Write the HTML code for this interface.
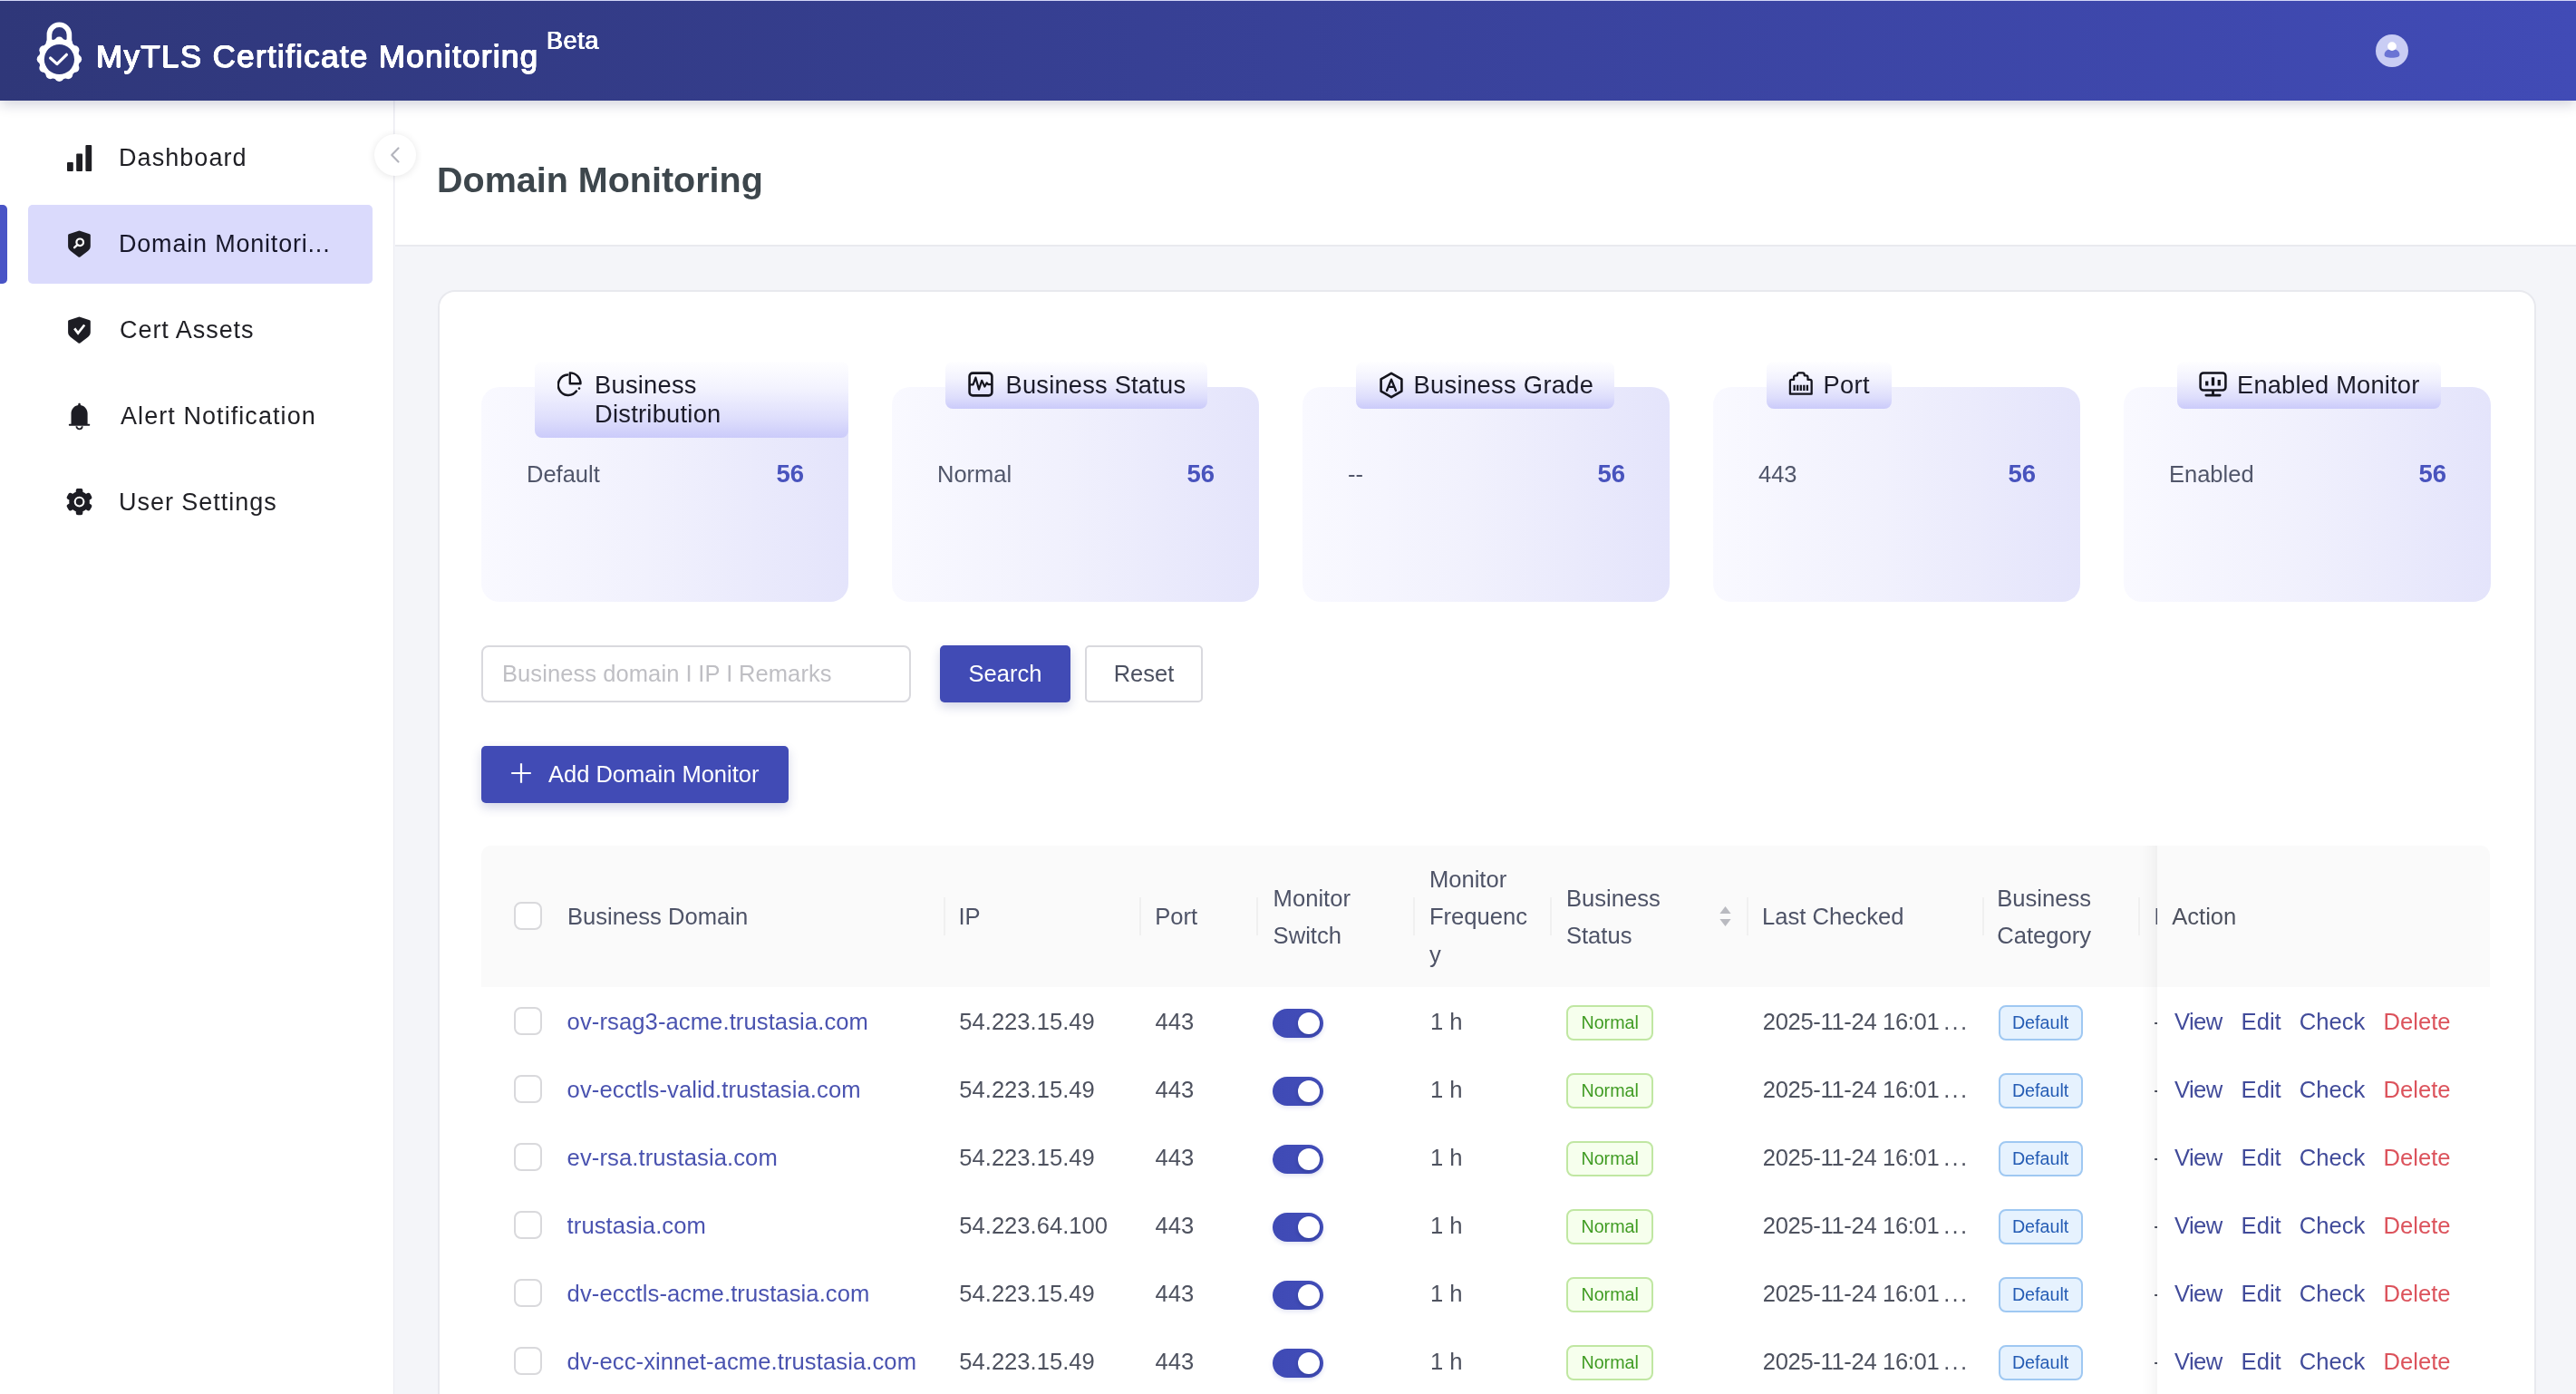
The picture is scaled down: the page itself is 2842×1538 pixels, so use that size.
<!DOCTYPE html>
<html lang="en">
<head>
<meta charset="utf-8">
<title>MyTLS Certificate Monitoring</title>
<style>
*{box-sizing:border-box;margin:0;padding:0}
html{-webkit-font-smoothing:antialiased}
html,body{width:2842px;height:1538px;overflow:hidden;background:#f4f5f9;font-family:"Liberation Sans",sans-serif;color:#4b5060}
.abs{position:absolute}
/* ---------- header ---------- */
#hdr{position:absolute;left:0;top:0;width:2842px;height:111px;border-top:1px solid #d3d6f7;background:linear-gradient(90deg,#2f3779 0%,#414bb6 100%);box-shadow:0 4px 14px rgba(20,25,70,.20);z-index:20}
#hdr .ttl{position:absolute;left:106px;top:39px;font-size:35px;line-height:44px;color:#fff;white-space:nowrap;text-shadow:.55px 0 0 #fff,-.55px 0 0 #fff,0 .5px 0 #fff,0 -.5px 0 #fff,.4px .4px 0 #fff,-.4px -.4px 0 #fff,.4px -.4px 0 #fff,-.4px .4px 0 #fff;letter-spacing:1.33px}
#hdr .beta{position:absolute;left:603px;top:29px;font-size:27px;line-height:30px;color:#fff;text-shadow:.45px 0 0 #fff,-.45px 0 0 #fff,0 .35px 0 #fff,0 -.35px 0 #fff;letter-spacing:.6px}
#hdr .logo{position:absolute;left:38px;top:21px}
#hdr .ava{position:absolute;left:2621px;top:37px;width:36px;height:36px;border-radius:50%;background:#c9cdf4;overflow:hidden}
/* ---------- sidebar ---------- */
#side{position:absolute;left:0;top:110px;width:435px;height:1428px;background:#fff;border-right:1px solid #ececf2;z-index:5}
.mi{position:absolute;left:31px;width:380px;height:87px;border-radius:5px;font-size:27px;color:#1f1f24;letter-spacing:.6px}
.mi .tx{position:absolute;left:102px;top:0;line-height:87px;white-space:nowrap}
.mi svg{position:absolute}
.mi.sel{background:#dadafc}
#selbar{position:absolute;left:0;top:116px;width:8px;height:87px;background:#4954c6;border-radius:0 5px 5px 0}
#colbtn{position:absolute;left:413px;top:148px;width:46px;height:46px;border-radius:50%;background:#fff;box-shadow:0 1px 8px rgba(0,0,0,.10);z-index:8}
/* ---------- page title ---------- */
#ptitle{position:absolute;left:436px;top:111px;width:2406px;height:160.5px;background:#fff;border-bottom:2px solid #e9eaef}
#ptitle h1{position:absolute;left:46px;top:63px;font-size:39.5px;line-height:48px;font-weight:bold;color:#3d464c;white-space:nowrap}
/* ---------- card ---------- */
#card{position:absolute;left:482.5px;top:319.5px;width:2315px;height:1300px;background:#fff;border:2px solid #e8e9ee;border-radius:19px}

/* ---------- stat cards ---------- */
.sc{position:absolute;top:427px;width:405px;height:237px;border-radius:20px;background:linear-gradient(90deg,#f9f9ff 0%,#f1f1fd 45%,#e4e4fb 100%)}
.tg{position:absolute;top:-28px;left:59px;max-width:346px;padding:10px 24px 10px 25px;display:flex;align-items:flex-start;border-radius:8px;background:linear-gradient(180deg,#fefeff 0%,#f3f3fe 35%,#dedefc 75%,#cbcbfa 100%);font-size:27.3px;line-height:32px;color:#1b1b29}
.tg svg{flex:none;margin:1px 15px 0 0}
.sr{position:absolute;left:50px;right:49px;top:76px;height:40px;line-height:40px;font-size:25.5px;color:#51566a}
.sr b{position:absolute;right:0;top:0;font-size:27.5px;color:#4853bd}
/* ---------- search ---------- */
#q{position:absolute;left:531px;top:712px;width:474px;height:63px;border:2px solid #d9d9de;border-radius:8px;background:#fff;font-size:25.5px;line-height:59px;padding-left:21px;color:#bfbfc4;white-space:nowrap;letter-spacing:.08px}
.btn{position:absolute;height:63px;line-height:62px;text-align:center;font-size:25.5px;border-radius:5px}
.btn.pri{background:#414bb5;color:#fff;box-shadow:0 5px 12px rgba(40,48,130,.20)}
.btn.def{background:#fff;border:2px solid #d9d9de;color:#4b5060;line-height:59px}

/* ---------- table ---------- */
#tbl{position:absolute;left:531px;top:933px;width:2216px;height:620px;overflow:hidden;border-radius:10px 10px 0 0;font-size:25.6px;color:#4e525f}
#tbl .hd{position:absolute;left:0;top:0;width:2216px;height:156px;background:#fafafa}
#tbl .th{position:absolute;line-height:41.6px;color:#4e5367;white-space:nowrap}
#tbl .sep{position:absolute;top:57px;width:2px;height:42px;background:#f0f0f0}
#tbl .row{position:absolute;left:0;width:2216px;height:75px;background:#fff}
#tbl .c{position:absolute;top:18px;line-height:41px;white-space:nowrap}
.cb{position:absolute;left:36px;width:31px;height:31px;border:2px solid #d9d9dc;border-radius:8px;background:#fff}
.lk{color:#4a53b0}
#fix .lk{color:#414b9a}
.sw{position:absolute;left:873px;top:24px;width:56px;height:32px;border-radius:16px;background:linear-gradient(90deg,#3f4ab5,#434eb9);box-shadow:0 2px 5px rgba(63,74,181,.16)}
.sw i{position:absolute;left:28px;top:4px;width:24px;height:24px;border-radius:50%;background:#fff;box-shadow:0 2px 4px rgba(0,20,80,.25)}
.tag{position:absolute;top:20px;height:39px;line-height:35px;border:2px solid;border-radius:8px;font-size:19.7px;text-align:center}
.tag.g{background:#f6ffed;border-color:#c0e7a2;color:#3f9b22}
.tag.b{background:#e6f2fe;border-color:#9fc8f2;color:#255cb4}
#fix{position:absolute;left:1849px;top:0;width:367px;height:620px;background:#fff}
#fix::before{content:'';position:absolute;left:-60px;top:0;bottom:0;width:60px;box-shadow:inset -20px 0 16px -16px rgba(5,5,5,.06)}
#fix .fh{position:absolute;left:0;top:0;width:367px;height:156px;background:#fafafa}
#fix .a{position:absolute;line-height:41px;white-space:nowrap}
.red{color:#dc535c}
.lc{letter-spacing:-.35px}.lc span{letter-spacing:2.3px;margin-left:4.8px}
#root{position:absolute;left:0;top:0;width:2842px;height:1538px;overflow:hidden;will-change:transform}
#q span{display:inline-block;width:6.6px;text-align:center}
</style>
</head>
<body>
<div id="root">
<div id="hdr">
  <svg class="logo" width="56" height="72" viewBox="0 0 56 72">
    <path d="M16.4 28 V16.2 a11 11 0 0 1 22 0 V28" fill="none" stroke="#fff" stroke-width="5.6"/>
    <g fill="#fff"><circle cx="27.4" cy="43.2" r="22.4"/><circle cx="27.40" cy="23.50" r="5"/><circle cx="37.25" cy="26.14" r="5"/><circle cx="44.46" cy="33.35" r="5"/><circle cx="47.10" cy="43.20" r="5"/><circle cx="44.46" cy="53.05" r="5"/><circle cx="37.25" cy="60.26" r="5"/><circle cx="27.40" cy="62.90" r="5"/><circle cx="17.55" cy="60.26" r="5"/><circle cx="10.34" cy="53.05" r="5"/><circle cx="7.70" cy="43.20" r="5"/><circle cx="10.34" cy="33.35" r="5"/><circle cx="17.55" cy="26.14" r="5"/></g>
    <circle cx="27.4" cy="43.5" r="16.6" fill="#2f377a"/>
    <path d="M17.6 42 L24.9 48.6 L35.4 38.3" fill="none" stroke="#fff" stroke-width="3.2" stroke-linecap="round" stroke-linejoin="round"/>
  </svg>
  <div class="ttl">MyTLS Certificate Monitoring</div>
  <div class="beta">Beta</div>
  <div class="ava"><svg width="36" height="36" viewBox="0 0 36 36"><path d="M9.6 22.4 C9.6 18.6 13 16 18 16 C23 16 26.4 18.6 26.4 22.4 C26.4 24.6 23 25.7 18 25.7 C13 25.7 9.6 24.6 9.6 22.4 Z" fill="#6a74d4"/><circle cx="18" cy="13.1" r="4.9" fill="#fff"/></svg></div>
</div>
<div id="side">
  <div id="selbar"></div>
  <div class="mi" style="top:21px">
    <svg style="left:43px;top:29px" width="28" height="30" viewBox="0 0 28 30"><rect x="0" y="19" width="6.8" height="10" rx="1" fill="#1f1f24"/><rect x="10.2" y="9.5" width="6.8" height="19.5" rx="1" fill="#1f1f24"/><rect x="20.4" y="0" width="6.8" height="29" rx="1" fill="#1f1f24"/></svg>
    <div class="tx" style="letter-spacing:1.06px;left:100px">Dashboard</div>
  </div>
  <div class="mi sel" style="top:116px">
    <svg style="left:43px;top:28px" width="27" height="31" viewBox="0 0 27 31"><path d="M13.45 0.4 L24.9 4.3 C25.5 4.5 25.8 5 25.8 5.6 V17.6 C25.8 19.7 24.8 21.5 23.2 22.7 L14.4 29.5 C13.8 29.9 13.1 29.9 12.5 29.5 L3.7 22.7 C2.1 21.5 1.1 19.7 1.1 17.6 V5.6 C1.1 5 1.4 4.5 2 4.3 Z" fill="#1d1d24"/><circle cx="14.2" cy="13.3" r="3.8" fill="none" stroke="#fff" stroke-width="2.2"/><path d="M11.4 16.1 L8.1 19.2" stroke="#fff" stroke-width="2.3" stroke-linecap="round"/></svg>
    <div class="tx" style="color:#17172a;letter-spacing:.8px;left:100px">Domain Monitori...</div>
  </div>
  <div class="mi" style="top:211px">
    <svg style="left:43px;top:28px" width="27" height="31" viewBox="0 0 27 31"><path d="M13.45 0.4 L24.9 4.3 C25.5 4.5 25.8 5 25.8 5.6 V17.6 C25.8 19.7 24.8 21.5 23.2 22.7 L14.4 29.5 C13.8 29.9 13.1 29.9 12.5 29.5 L3.7 22.7 C2.1 21.5 1.1 19.7 1.1 17.6 V5.6 C1.1 5 1.4 4.5 2 4.3 Z" fill="#1d1d24"/><path d="M8.2 13.4 L12.1 18.6 L19.2 9.5" fill="none" stroke="#fff" stroke-width="2.7" stroke-linejoin="miter"/></svg>
    <div class="tx" style="letter-spacing:.95px;left:101px">Cert Assets</div>
  </div>
  <div class="mi" style="top:306px">
    <svg style="left:44px;top:28px" width="26" height="31" viewBox="0 0 26 31"><path d="M12.55 0.7 c.8 0 1.3 .6 1.3 1.3 v1.1 C18.4 3.9 21.6 7.6 21.6 12.3 V23.7 H23.3 c.55 0 .95 .45 .95 1 s-.4 1 -.95 1 H1.8 c-.55 0 -.95 -.45 -.95 -1 s.4 -1 .95 -1 H3.5 V12.3 C3.5 7.6 6.7 3.9 11.25 3.1 v-1.1 c0 -.7 .5 -1.3 1.3 -1.3 Z" fill="#1d1d24"/><path d="M9.4 26.2 a3.15 3.15 0 0 0 6.3 0" fill="none" stroke="#1d1d24" stroke-width="1.8"/></svg>
    <div class="tx" style="letter-spacing:1.07px">Alert Notification</div>
  </div>
  <div class="mi" style="top:401px">
    <svg style="left:42px;top:28px" width="30" height="31" viewBox="0 0 30 31"><g fill="#1d1d24"><circle cx="14.55" cy="14.6" r="11.3"/><rect x="10.75" y="-0.10" width="7.6" height="8" rx="2.2" transform="rotate(0 14.55 14.6)"/><rect x="10.75" y="-0.10" width="7.6" height="8" rx="2.2" transform="rotate(60 14.55 14.6)"/><rect x="10.75" y="-0.10" width="7.6" height="8" rx="2.2" transform="rotate(120 14.55 14.6)"/><rect x="10.75" y="-0.10" width="7.6" height="8" rx="2.2" transform="rotate(180 14.55 14.6)"/><rect x="10.75" y="-0.10" width="7.6" height="8" rx="2.2" transform="rotate(240 14.55 14.6)"/><rect x="10.75" y="-0.10" width="7.6" height="8" rx="2.2" transform="rotate(300 14.55 14.6)"/></g><circle cx="14.55" cy="14.6" r="4.85" fill="none" stroke="#fff" stroke-width="2.1"/></svg>
    <div class="tx" style="letter-spacing:.97px;left:100px">User Settings</div>
  </div>
</div>
<div id="colbtn"><svg width="46" height="46" viewBox="0 0 46 46"><path d="M26.5 15.5 L19.2 23 L26.5 30.5" fill="none" stroke="#b4b5bd" stroke-width="2.2" stroke-linecap="round" stroke-linejoin="round"/></svg></div>
<div id="ptitle"><h1>Domain Monitoring</h1></div>
<div id="card"></div>
<div class="sc" style="left:531px"><div class="tg"><svg width="27" height="28" viewBox="0 0 27 28"><path d="M11.2 3.6 A11.2 11.2 0 1 0 20.9 21.6" fill="none" stroke="#14141d" stroke-width="2.5" stroke-linecap="round"/><path d="M13.8 1.4 V13.3 H25.5 A11.8 11.8 0 0 0 13.8 1.4 Z" fill="none" stroke="#14141d" stroke-width="2.4" stroke-linejoin="round"/><circle cx="24" cy="18.6" r="1.3" fill="#14141d"/></svg><span style="width:258px;margin-left:-1px;letter-spacing:.25px">Business<br>Distribution</span></div><div class="sr">Default<b>56</b></div></div>
<div class="sc" style="left:984px"><div class="tg"><svg width="28" height="28" viewBox="0 0 28 28"><rect x="1.6" y="1.6" width="24.8" height="24.8" rx="3.6" fill="none" stroke="#14141d" stroke-width="2.6"/><path d="M2.5 14.4 H5.6 L8.4 6.6 L12 19.6 L15.2 9.8 L18.4 16.6 L20.6 12.4 L22.4 14.2 H25.5" fill="none" stroke="#14141d" stroke-width="2.2" stroke-linejoin="round" stroke-linecap="round"/></svg><span style="margin-left:-1.5px;letter-spacing:.2px">Business Status</span></div><div class="sr">Normal<b>56</b></div></div>
<div class="sc" style="left:1437px"><div class="tg"><svg width="28" height="30" viewBox="0 0 28 30"><path d="M14 1.8 L25.4 8.4 V21.6 L14 28.2 L2.6 21.6 V8.4 Z" fill="none" stroke="#14141d" stroke-width="2.6" stroke-linejoin="round"/><path d="M9 21 L14 8.6 L19 21 M10.8 16.8 H17.2" fill="none" stroke="#14141d" stroke-width="2.3" stroke-linejoin="round" stroke-linecap="round"/></svg><span style="margin-left:-4.5px;letter-spacing:.33px;margin-right:-1px">Business Grade</span></div><div class="sr">--<b>56</b></div></div>
<div class="sc" style="left:1890px"><div class="tg"><svg width="27.6" height="26.6" viewBox="0 0 29 28" style="margin-left:-.6px;margin-right:10.4px"><path d="M2 26 V11.4 C2 10.3 2.9 9.4 4 9.4 H6.4 V6.6 C6.4 5.5 7.3 4.6 8.4 4.6 H10.4 V3.4 C10.4 2.3 11.3 1.4 12.4 1.4 H16.6 C17.7 1.4 18.6 2.3 18.6 3.4 V4.6 H20.6 C21.7 4.6 22.6 5.5 22.6 6.6 V9.4 H25 C26.1 9.4 27 10.3 27 11.4 V26 Z" fill="none" stroke="#14141d" stroke-width="2.4" stroke-linejoin="round"/><path d="M7 15.4 V22 M10.75 15.4 V22 M14.5 15.4 V22 M18.25 15.4 V22 M22 15.4 V22" stroke="#14141d" stroke-width="2.4" stroke-linecap="butt"/></svg><span style="letter-spacing:.4px;margin-right:.2px">Port</span></div><div class="sr">443<b>56</b></div></div>
<div class="sc" style="left:2343px"><div class="tg"><svg width="31" height="28" viewBox="0 0 32 29" style="margin-left:-1.2px;margin-right:11.2px"><rect x="1.6" y="1.6" width="28.8" height="19.6" rx="3.4" fill="none" stroke="#14141d" stroke-width="2.6"/><path d="M9 16 V11 M16 16 V6.6 M23 16 V9.4" stroke="#14141d" stroke-width="3.4"/><path d="M16 21 V26" stroke="#14141d" stroke-width="3"/><path d="M8 27 H24" stroke="#14141d" stroke-width="2.8" stroke-linecap="round"/></svg><span style="letter-spacing:.18px;margin-right:-.6px">Enabled Monitor</span></div><div class="sr">Enabled<b>56</b></div></div>
<div id="q">Business domain <span>I</span> IP <span>I</span> Remarks</div>
<div class="btn pri" style="left:1037px;top:712px;width:144px">Search</div>
<div class="btn def" style="left:1197px;top:712px;width:130px">Reset</div>
<div class="btn pri" style="left:531px;top:823px;width:339px;text-align:left"><svg style="position:absolute;left:33.4px;top:19.4px" width="22" height="22" viewBox="0 0 22 22"><path d="M11 .2 V21.8 M.2 11 H21.8" stroke="#fff" stroke-width="2.2"/></svg><span style="position:absolute;left:74px">Add Domain Monitor</span></div>

<div id="tbl">
<div class="hd"></div>
<div class="cb" style="top:62px"></div>
<div class="th" style="left:95.0px;top:58.4px">Business Domain</div>
<div class="th" style="left:526.5px;top:58.4px">IP</div>
<div class="th" style="left:743.2px;top:58.4px">Port</div>
<div class="th" style="left:873.6px;top:37.6px">Monitor<br>Switch</div>
<div class="th" style="left:1045.9px;top:16.8px">Monitor<br>Frequenc<br>y</div>
<div class="th" style="left:1196.9px;top:37.6px">Business<br>Status</div>
<div class="th" style="left:1413.0px;top:58.4px">Last Checked</div>
<div class="th" style="left:1672.2px;top:37.6px">Business<br>Category</div>
<div class="th" style="left:1845.4px;top:58.4px">Remarks</div>
<div class="sep" style="left:510px"></div>
<div class="sep" style="left:726px"></div>
<div class="sep" style="left:855px"></div>
<div class="sep" style="left:1028px"></div>
<div class="sep" style="left:1179px"></div>
<div class="sep" style="left:1396px"></div>
<div class="sep" style="left:1656px"></div>
<div class="sep" style="left:1828px"></div>
<svg style="position:absolute;left:1365px;top:65px" width="15" height="26" viewBox="0 0 15 26"><path d="M7.5 2 L13.6 10 H1.4 Z" fill="#b9bac0"/><path d="M7.5 24 L13.6 16 H1.4 Z" fill="#b9bac0"/></svg>
<div class="row" style="top:156px"><div class="cb" style="top:22px"></div><div class="c lk" style="left:94.6px;letter-spacing:.09px">ov-rsag3-acme.trustasia.com</div><div class="c" style="left:527.3px">54.223.15.49</div><div class="c" style="left:743.6px">443</div><div class="sw"><i></i></div><div class="c" style="left:1047px">1 h</div><div class="tag g" style="left:1197.4px;width:95.6px">Normal</div><div class="c lc" style="left:1413.8px">2025-11-24 16:01<span>...</span></div><div class="tag b" style="left:1673.5px;width:93.2px">Default</div><div class="c" style="left:1845px">-</div></div>
<div class="row" style="top:231px"><div class="cb" style="top:22px"></div><div class="c lk" style="left:94.6px;letter-spacing:.09px">ov-ecctls-valid.trustasia.com</div><div class="c" style="left:527.3px">54.223.15.49</div><div class="c" style="left:743.6px">443</div><div class="sw"><i></i></div><div class="c" style="left:1047px">1 h</div><div class="tag g" style="left:1197.4px;width:95.6px">Normal</div><div class="c lc" style="left:1413.8px">2025-11-24 16:01<span>...</span></div><div class="tag b" style="left:1673.5px;width:93.2px">Default</div><div class="c" style="left:1845px">-</div></div>
<div class="row" style="top:306px"><div class="cb" style="top:22px"></div><div class="c lk" style="left:94.6px;letter-spacing:.09px">ev-rsa.trustasia.com</div><div class="c" style="left:527.3px">54.223.15.49</div><div class="c" style="left:743.6px">443</div><div class="sw"><i></i></div><div class="c" style="left:1047px">1 h</div><div class="tag g" style="left:1197.4px;width:95.6px">Normal</div><div class="c lc" style="left:1413.8px">2025-11-24 16:01<span>...</span></div><div class="tag b" style="left:1673.5px;width:93.2px">Default</div><div class="c" style="left:1845px">-</div></div>
<div class="row" style="top:381px"><div class="cb" style="top:22px"></div><div class="c lk" style="left:94.6px;letter-spacing:.09px">trustasia.com</div><div class="c" style="left:527.3px">54.223.64.100</div><div class="c" style="left:743.6px">443</div><div class="sw"><i></i></div><div class="c" style="left:1047px">1 h</div><div class="tag g" style="left:1197.4px;width:95.6px">Normal</div><div class="c lc" style="left:1413.8px">2025-11-24 16:01<span>...</span></div><div class="tag b" style="left:1673.5px;width:93.2px">Default</div><div class="c" style="left:1845px">-</div></div>
<div class="row" style="top:456px"><div class="cb" style="top:22px"></div><div class="c lk" style="left:94.6px;letter-spacing:.09px">dv-ecctls-acme.trustasia.com</div><div class="c" style="left:527.3px">54.223.15.49</div><div class="c" style="left:743.6px">443</div><div class="sw"><i></i></div><div class="c" style="left:1047px">1 h</div><div class="tag g" style="left:1197.4px;width:95.6px">Normal</div><div class="c lc" style="left:1413.8px">2025-11-24 16:01<span>...</span></div><div class="tag b" style="left:1673.5px;width:93.2px">Default</div><div class="c" style="left:1845px">-</div></div>
<div class="row" style="top:531px"><div class="cb" style="top:22px"></div><div class="c lk" style="left:94.6px;letter-spacing:.09px">dv-ecc-xinnet-acme.trustasia.com</div><div class="c" style="left:527.3px">54.223.15.49</div><div class="c" style="left:743.6px">443</div><div class="sw"><i></i></div><div class="c" style="left:1047px">1 h</div><div class="tag g" style="left:1197.4px;width:95.6px">Normal</div><div class="c lc" style="left:1413.8px">2025-11-24 16:01<span>...</span></div><div class="tag b" style="left:1673.5px;width:93.2px">Default</div><div class="c" style="left:1845px">-</div></div>
<div id="fix"><div class="fh"></div><div class="a" style="left:16.2px;top:58.2px">Action</div>
<div class="a lk" style="left:19px;top:174px;letter-spacing:-.6px">View</div><div class="a lk" style="left:92.6px;top:174px">Edit</div><div class="a lk" style="left:156.7px;top:174px">Check</div><div class="a red" style="left:249.5px;top:174px">Delete</div>
<div class="a lk" style="left:19px;top:249px;letter-spacing:-.6px">View</div><div class="a lk" style="left:92.6px;top:249px">Edit</div><div class="a lk" style="left:156.7px;top:249px">Check</div><div class="a red" style="left:249.5px;top:249px">Delete</div>
<div class="a lk" style="left:19px;top:324px;letter-spacing:-.6px">View</div><div class="a lk" style="left:92.6px;top:324px">Edit</div><div class="a lk" style="left:156.7px;top:324px">Check</div><div class="a red" style="left:249.5px;top:324px">Delete</div>
<div class="a lk" style="left:19px;top:399px;letter-spacing:-.6px">View</div><div class="a lk" style="left:92.6px;top:399px">Edit</div><div class="a lk" style="left:156.7px;top:399px">Check</div><div class="a red" style="left:249.5px;top:399px">Delete</div>
<div class="a lk" style="left:19px;top:474px;letter-spacing:-.6px">View</div><div class="a lk" style="left:92.6px;top:474px">Edit</div><div class="a lk" style="left:156.7px;top:474px">Check</div><div class="a red" style="left:249.5px;top:474px">Delete</div>
<div class="a lk" style="left:19px;top:549px;letter-spacing:-.6px">View</div><div class="a lk" style="left:92.6px;top:549px">Edit</div><div class="a lk" style="left:156.7px;top:549px">Check</div><div class="a red" style="left:249.5px;top:549px">Delete</div>
</div>
</div>
</div>
</body>
</html>
